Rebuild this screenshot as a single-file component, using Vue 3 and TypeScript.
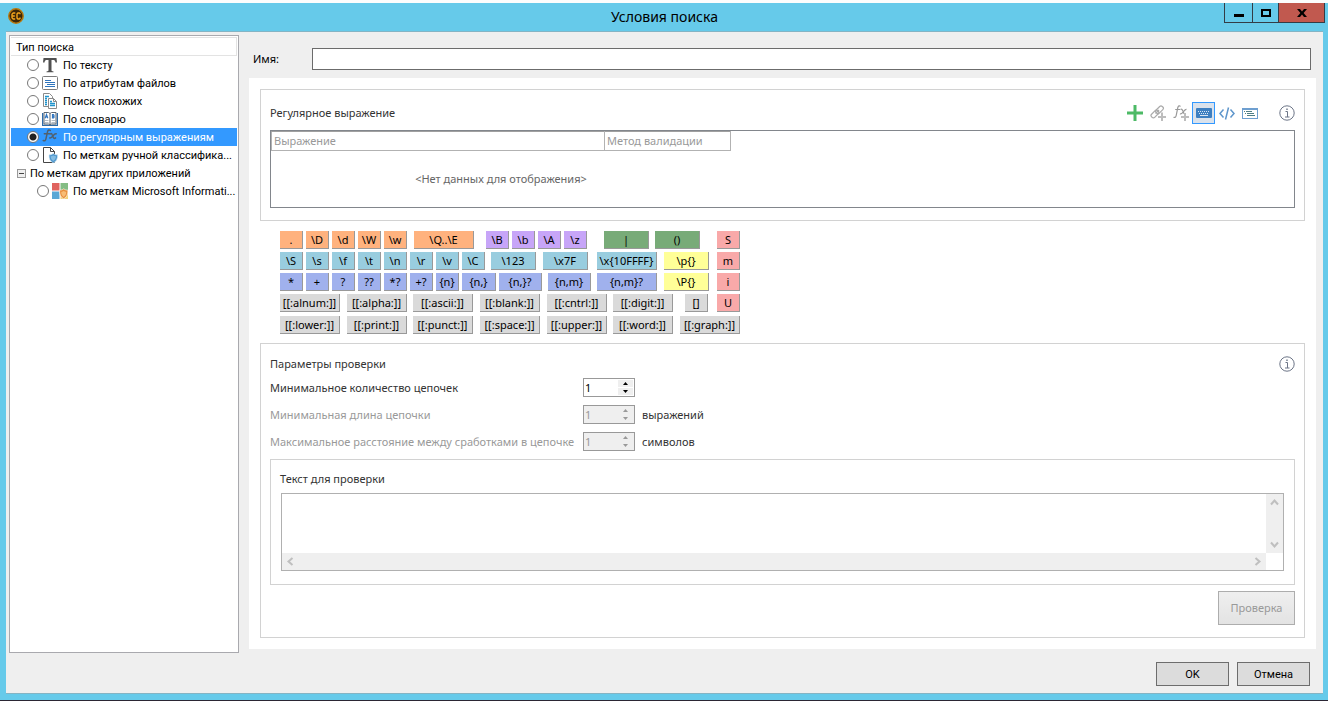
<script setup lang="ts">
import { ref } from 'vue'

type Tone = 'orange' | 'violet' | 'green' | 'red' | 'cyan' | 'yellow' | 'blue' | 'gray'
type Size = 's' | 'm' | 'n' | 'l' | 'xl'
interface Key { text: string; tone: Tone; size: Size; lead: number }

const k = (text: string, tone: Tone, size: Size = 's', lead = 3): Key => ({ text, tone, size, lead })

const keyRows: Key[][] = [
  [
    k('.', 'orange', 's', 0), k('\\D', 'orange'), k('\\d', 'orange'), k('\\W', 'orange'), k('\\w', 'orange'),
    k('\\Q..\\E', 'orange', 'xl', 7),
    k('\\B', 'violet', 's', 12), k('\\b', 'violet'), k('\\A', 'violet'), k('\\z', 'violet'),
    k('|', 'green', 'l', 17), k('()', 'green', 'l', 6), k('S', 'red', 's', 17),
  ],
  [
    k('\\S', 'cyan', 's', 0), k('\\s', 'cyan'), k('\\f', 'cyan'), k('\\t', 'cyan'), k('\\n', 'cyan'),
    k('\\r', 'cyan'), k('\\v', 'cyan'), k('\\C', 'cyan'),
    k('\\123', 'cyan', 'l', 6), k('\\x7F', 'cyan', 'l', 7), k('\\x{10FFFF}', 'cyan', 'xl', 9),
    k('\\p{}', 'yellow', 'l', 7), k('m', 'red', 's', 8),
  ],
  [
    k('*', 'blue', 's', 0), k('+', 'blue'), k('?', 'blue'), k('??', 'blue'), k('*?', 'blue'), k('+?', 'blue'), k('{n}', 'blue'),
    k('{n,}', 'blue', 'n'), k('{n,}?', 'blue', 'm'), k('{n,m}', 'blue', 'm', 6), k('{n,m}?', 'blue', 'xl', 6),
    k('\\P{}', 'yellow', 'l', 7), k('i', 'red', 's', 8),
  ],
  [
    k('[[:alnum:]]', 'gray', 'xl', 0), k('[[:alpha:]]', 'gray', 'xl', 7), k('[[:ascii:]]', 'gray', 'xl', 6),
    k('[[:blank:]]', 'gray', 'xl', 7), k('[[:cntrl:]]', 'gray', 'xl', 7), k('[[:digit:]]', 'gray', 'xl', 6),
    k('[]', 'gray', 's', 12), k('U', 'red', 's', 9),
  ],
  [
    k('[[:lower:]]', 'gray', 'xl', 0), k('[[:print:]]', 'gray', 'xl', 7), k('[[:punct:]]', 'gray', 'xl', 6),
    k('[[:space:]]', 'gray', 'xl', 7), k('[[:upper:]]', 'gray', 'xl', 7), k('[[:word:]]', 'gray', 'xl', 6),
    k('[[:graph:]]', 'gray', 'xl', 7),
  ],
]

const searchTypes = [
  { id: 'text', label: 'По тексту' },
  { id: 'attrs', label: 'По атрибутам файлов' },
  { id: 'similar', label: 'Поиск похожих' },
  { id: 'dict', label: 'По словарю' },
  { id: 'regex', label: 'По регулярным выражениям' },
  { id: 'marks', label: 'По меткам ручной классифика...' },
]
const selected = ref('regex')

const name = ref('')
const sample = ref('')
const params = ref([
  { id: 'count', label: 'Минимальное количество цепочек', unit: '', value: 1, disabled: false },
  { id: 'length', label: 'Минимальная длина цепочки', unit: 'выражений', value: 1, disabled: true },
  { id: 'distance', label: 'Максимальное расстояние между сработками в цепочке', unit: 'символов', value: 1, disabled: true },
])
</script>

<template>
  <div class="window">
    <header class="titlebar">
      <svg class="app-icon" viewBox="0 0 16 16" aria-hidden="true">
        <circle cx="8" cy="8" r="7.2" fill="#3b2608" stroke="#b8770e" stroke-width="1.5" />
        <path d="M7.3 5H5.2L4 6.2v3.6L5.2 11h2M4.2 8h2.6M12 6.3V5.6L11.4 5H9.9L9 6v4l.9 1h1.5l.6-.6v-.8" fill="none" stroke="#f3a51c" stroke-width="1.4" />
      </svg>
      <h1>Условия поиска</h1>
      <div class="caption-buttons">
        <button type="button" class="minimize" aria-label="Свернуть"><svg viewBox="0 0 10 10"><path d="M0 6h10v3H0z" /></svg></button>
        <button type="button" class="maximize" aria-label="Развернуть"><svg viewBox="0 0 10 10"><path d="M1 2h8v6H1z" fill="none" stroke="#000" stroke-width="2" /></svg></button>
        <button type="button" class="close" aria-label="Закрыть"><svg viewBox="0 0 10 10"><path d="M0 1h3l2 2.400L7 1h3L6.600 5 10 9H7L5 6.600 3 9H0l3.400-4z" /></svg></button>
      </div>
    </header>

    <div class="client">
      <div class="columns">
        <aside class="types" role="radiogroup" aria-labelledby="types-title">
          <div id="types-title" class="types-title">Тип поиска</div>
          <label v-for="t in searchTypes" :key="t.id" class="type" :class="{ selected: selected === t.id }">
            <input v-model="selected" type="radio" name="search-type" :value="t.id" />
            <svg viewBox="0 0 16 16" aria-hidden="true">
              <path v-if="t.id === 'text'" d="M1.500 1h13l.5 4.500h-1.500c-.3-2-1-2.500-2.500-2.500H9.500v10.200c0 .8.5 1.100 2 1.200V15.300h-7v-.9c1.500-.1 2-.4 2-1.200V3H5c-1.500 0-2.200.5-2.500 2.500H1z" fill="#505050" />
              <g v-else-if="t.id === 'attrs'" fill="none">
                <rect x=".5" y="1.500" width="15" height="13" rx="1" stroke="#7c7c7c" fill="#fff" />
                <path d="M3 5.500h6M3 7.500h10M5 9.500h8M3 11.500h10" stroke="#2f75bd" />
              </g>
              <g v-else-if="t.id === 'similar'" fill="none">
                <path d="M6.500 13.500h-5V.5h6l3 3v1.500" stroke="#8a8a8a" />
                <path d="M6.500 5.500h5l3 3v7h-8z" fill="#fff" stroke="#8a8a8a" />
                <path d="M11.500 5.500v3h3" stroke="#8a8a8a" />
                <path d="M3 3.500h4M3 5.500h2M3 7.500h2M3 9.500h2M3 11.500h2M8 8.500h2M8 10.500h5M8 12.500h5" stroke="#1f93cc" stroke-width="1.300" />
              </g>
              <g v-else-if="t.id === 'dict'" fill="none">
                <path d="M.6 2v12.400h14.800V2" stroke="#2f6ba8" stroke-width="1.300" />
                <path d="M2 1.500h4.500L8 2.500l1.500-1H14v11.500H9.500L8 14l-1.500-1H2z" fill="#fff" stroke="#5a6470" />
                <path d="M8 2.500V14" stroke="#5a6470" />
                <path d="M3.200 7.200 4.500 3.500l1.300 3.700M3.700 6h1.700M10.500 3.600v3.300h1q1.200-.8 0-1.600h-1 1q1-.9 0-1.700z" stroke="#2f75c0" stroke-width="1.200" />
                <path d="M3 9.500h3.500M3 11.500h3.500M9.500 9.500H13M9.500 11.500H13" stroke="#b4bcc4" />
              </g>
              <g v-else-if="t.id === 'regex'" fill="none" stroke="#51606e" stroke-linecap="round">
                <path d="M8.300 1.500C7.200.4 6 .9 5.500 2.900L4 9.700c-.4 1.900-1.300 2.500-2.800 1.800M2.300 4.700h5" stroke-width="1.500" />
                <path d="M8.200 5c1-.8 1.600-.3 2 .7l1.200 2.800c.5 1.100 1.300 1.200 2.200.4M14.200 4.800c-1.300-.2-2.200.7-3.200 2.100S9 9.400 7.600 8.900" stroke-width="1.500" />
              </g>
              <g v-else>
                <path d="M1.500 15.500V.5h7l4 4v11z" fill="#fff" stroke="#454545" />
                <path d="M8.500.5v4h4" fill="none" stroke="#454545" />
                <path d="M11.300 6.500c1.200 1 2.400 1.300 4.300 1.300 0 4-.9 6.500-4.300 8.100-3.400-1.600-4.300-4.100-4.300-8.100 1.900 0 3.100-.3 4.300-1.300z" fill="#4f97cd" stroke="#d8edf8" stroke-width=".6" />
                <path d="M11.300 8.500c.8.500 1.700.7 2.700.8-.1 2.300-.9 3.700-2.700 4.700-1.800-1-2.600-2.400-2.700-4.700 1-.1 1.900-.3 2.700-.8z" fill="#85bde2" />
              </g>
            </svg>
            <span>{{ t.label }}</span>
          </label>
          <div class="branch">
            <button type="button" aria-label="Свернуть группу" aria-expanded="true"></button>
            <span>По меткам других приложений</span>
          </div>
          <label class="type nested" :class="{ selected: selected === 'mip' }">
            <input v-model="selected" type="radio" name="search-type" value="mip" />
            <svg viewBox="0 0 16 16" aria-hidden="true">
              <path d="M0 0h7.500v7.500H0z" fill="#e0635f" /><path d="M8.500 0H16v7.500H8.500z" fill="#84bd84" />
              <path d="M0 8.500h7.500V16H0z" fill="#5aa7d6" /><path d="M8.500 8.500H16V16H8.500z" fill="#f3d27a" />
              <path d="M11.700 5.800c1.300 1 2.500 1.300 4.200 1.300 0 4.400-.9 7-4.200 8.700-3.300-1.700-4.200-4.300-4.200-8.700 1.700 0 2.900-.3 4.200-1.300z" fill="#e88f3c" stroke="#fff" stroke-width=".6" />
              <path d="M11.700 8c.7.500 1.500.8 2.500.9-.1 2.400-.8 3.900-2.500 5-1.700-1.100-2.400-2.600-2.500-5 1-.1 1.800-.4 2.500-.9z" fill="#f7bd76" />
            </svg>
            <span>По меткам Microsoft Informati...</span>
          </label>
        </aside>

        <main class="content">
          <div class="name-row">
            <label for="name">Имя:</label>
            <input id="name" v-model="name" type="text" />
          </div>

          <div class="page">
            <section class="group regex">
              <div class="group-head">
                <h2>Регулярное выражение</h2>
                <div class="toolbar">
                  <button type="button" aria-label="Добавить"><svg viewBox="0 0 16 16"><path d="M6.500 0h3v6.500H16v3H9.500V16h-3V9.500H0v-3h6.500z" fill="#4dba66" /></svg></button>
                  <button type="button" aria-label="Добавить ссылку">
                    <svg viewBox="0 0 16 16" fill="none" stroke="#aaa" stroke-width="1.200">
                      <rect x="5.200" y="2.600" width="8.600" height="4.400" rx="1.800" transform="rotate(-45 9.500 4.800)" />
                      <rect x=".6" y="6.800" width="8.600" height="4.400" rx="1.800" transform="rotate(-45 4.900 9)" />
                      <path d="m5.500 8.500 3.500-3.500" />
                      <path d="M12 7.500v8.500M8 12h8" stroke="#bdbdbd" stroke-width="2" />
                    </svg>
                  </button>
                  <button type="button" aria-label="Добавить функцию">
                    <svg viewBox="0 0 16 16" fill="none" stroke="#999">
                      <path d="M7.500 1.500C6.500.2 5.200.7 4.700 3L3.200 10.500C2.900 12.300 2 12.800.5 12.200M2.200 4.500H7" stroke-width="1.200" />
                      <path d="M7.500 4.500c1.300-.8 1.900.2 2.300 1.300l1.200 3M13.500 4.300c-1.200-.2-1.900.8-3 2.200S8.300 9.500 7 8.800" stroke-width="1.200" />
                      <path d="M12 8v8M8 12h8" stroke="#bdbdbd" stroke-width="2" />
                    </svg>
                  </button>
                  <button type="button" class="pressed" aria-label="Клавиатура" aria-pressed="true">
                    <svg viewBox="0 0 16 16"><rect y="3" width="16" height="10" rx="1" fill="#3d7fc1" />
                      <path d="M2 6.500h12M3 8.500h10" stroke="#d9e6f3" stroke-dasharray="1 1" /><path d="M4 10.500h8" stroke="#d9e6f3" /></svg>
                  </button>
                  <button type="button" aria-label="Код"><svg viewBox="0 0 16 16"><path d="M4.500 4.500 1 8.500l3.500 4M11.500 4.500l3.500 4-3.500 4M9.500 2.500l-3 12" fill="none" stroke="#5e96cc" stroke-width="1.500" /></svg></button>
                  <button type="button" aria-label="Текст">
                    <svg viewBox="0 0 16 16" fill="none"><rect x=".5" y="3.500" width="15" height="10" stroke="#6e9fd0" /><path d="M0 4h16" stroke="#6e9fd0" stroke-width="2" />
                      <path d="M2 6.500h1M4 6.500h6M3 8.500h1M5 8.500h7M5 10.500h8" stroke="#4f7f86" /></svg>
                  </button>
                  <button type="button" class="info" aria-label="Справка">
                    <svg viewBox="0 0 16 16" fill="none" stroke="#6c7587"><circle cx="8" cy="8" r="7.200" /><path d="M6.500 6.500H8.500V12M6 12h4.500" /><path d="M7.300 4.200h1.400" stroke-width="1.500" /></svg>
                  </button>
                </div>
              </div>
              <div class="grid-box">
                <table>
                  <thead><tr><th scope="col" class="expr">Выражение</th><th scope="col">Метод валидации</th></tr></thead>
                  <tbody><tr><td colspan="2">&lt;Нет данных для отображения&gt;</td></tr></tbody>
                </table>
              </div>
            </section>

            <div class="keys">
              <div v-for="(row, i) in keyRows" :key="i" class="key-row">
                <button v-for="key in row" :key="key.text" type="button" :class="['key', key.tone, 'w-' + key.size, 'lead-' + key.lead]">{{ key.text }}</button>
              </div>
            </div>

            <section class="group params">
              <div class="group-head">
                <h2>Параметры проверки</h2>
                <button type="button" class="info" aria-label="Справка">
                  <svg viewBox="0 0 16 16" fill="none" stroke="#6c7587"><circle cx="8" cy="8" r="7.200" /><path d="M6.500 6.500H8.500V12M6 12h4.500" /><path d="M7.300 4.200h1.400" stroke-width="1.500" /></svg>
                </button>
              </div>
              <div v-for="p in params" :key="p.id" class="param" :class="{ off: p.disabled }">
                <label :for="p.id">{{ p.label }}</label>
                <div class="spin">
                  <input :id="p.id" v-model="p.value" type="number" min="1" :disabled="p.disabled" />
                  <div class="arrows">
                    <button type="button" aria-label="Больше" :disabled="p.disabled" @click="p.value++"><svg viewBox="0 0 5 3"><path d="M0 3 2.500 0 5 3z" /></svg></button>
                    <button type="button" aria-label="Меньше" :disabled="p.disabled" @click="p.value--"><svg viewBox="0 0 5 3"><path d="M0 0 2.500 3 5 0z" /></svg></button>
                  </div>
                </div>
                <span class="unit">{{ p.unit }}</span>
              </div>

              <div class="sample">
                <label for="sample">Текст для проверки</label>
                <div class="memo">
                  <textarea id="sample" v-model="sample"></textarea>
                  <div class="bar vertical">
                    <svg viewBox="0 0 9 8"><path d="m1 6 3.500-4L8 6" /></svg>
                    <svg viewBox="0 0 9 8"><path d="m1 2 3.500 4L8 2" /></svg>
                  </div>
                  <div class="bar horizontal">
                    <svg viewBox="0 0 8 9"><path d="M6 1 2 4.500 6 8" /></svg>
                    <svg viewBox="0 0 8 9"><path d="m2 1 4 3.500L2 8" /></svg>
                  </div>
                </div>
              </div>
              <button type="button" class="check" disabled>Проверка</button>
            </section>
          </div>
        </main>
      </div>

      <footer>
        <button type="button">OK</button>
        <button type="button">Отмена</button>
      </footer>
    </div>
  </div>
</template>

<style>
html, body { margin: 0; background: #fff; }
</style>

<style scoped>
* { box-sizing: border-box; }
button, input, textarea { font: inherit; color: inherit; margin: 0; padding: 0; border: 0; border-radius: 0; outline: 0; }
svg { display: block; flex: none; }
h1, h2 { margin: 0; font-weight: 400; }

.window {
  display: flex;
  flex-direction: column;
  min-height: 100vh;
  padding: 0 5px 6px 6px;
  border-top: 3px solid #fcfdfd;
  border-bottom: 1px solid #2b2634;
  background: #66caea;
  color: #000;
  font: 11px/18px Roboto, "Noto Sans", sans-serif;
}
.titlebar { display: grid; grid-template-columns: 1fr auto 1fr; height: 28px; }
.app-icon { width: 16px; height: 16px; margin: 5px 0 0 2px; }
.titlebar h1 { font: 14px/27px "Noto Sans", sans-serif; }
.caption-buttons { display: flex; justify-self: end; height: 20px; margin-right: -2px; border: 1px solid #333c46; border-top: 0; }
.caption-buttons button { display: flex; align-items: center; justify-content: center; width: 28px; background: transparent; border-right: 1px solid #333c46; }
.caption-buttons .maximize { width: 26px; }
.caption-buttons .close { width: 45px; background: #c1594f; border-right: 0; }
.caption-buttons svg { width: 10px; height: 10px; }

.client { flex: 1; display: flex; flex-direction: column; background: #efefef; border-top: 1px solid #84b4c4; border-bottom: 1px solid #84b4c4; }
.columns { flex: 1; display: flex; gap: 10px; padding: 3px 7px 0 3px; }

.types { width: 230px; padding: 1px; border: 1px solid #a9a9ae; background: #fff; }
.types-title { height: 19px; padding-left: 5px; line-height: 20px; border: 1px solid #e3e3e3; border-left: 0; }
.type { display: flex; align-items: center; height: 18px; padding: 0 2px 0 16px; white-space: nowrap; }
.type.nested { padding-left: 26px; }
.type.selected { background: #3399ff; color: #fff; }
.type span, .branch span { padding-top: 2px; }
.type input { appearance: none; flex: none; width: 12px; height: 12px; border: 1px solid #777; border-radius: 50%; background: #fff; }
.type input:checked { background: radial-gradient(circle, #222 0 3px, #fff 4px); }
.type svg { width: 16px; height: 16px; margin: 0 5px 0 3px; }
.branch { display: flex; align-items: center; gap: 4px; height: 18px; padding-left: 6px; }
.branch button { width: 9px; height: 9px; border: 1px solid #999; background: linear-gradient(#444, #444) center / 5px 1px no-repeat #eee; }

.content { flex: 1; min-width: 0; display: flex; flex-direction: column; }
.name-row { display: flex; align-items: center; height: 22px; margin: 13px 5px 8px 4px; }
.name-row label { width: 59px; font-family: "Noto Sans", sans-serif; }
.name-row input { flex: 1; height: 22px; padding: 0 4px; border: 1px solid #6b6b6b; background: #fff; }

.page { padding: 11px; background: #fff; color: #333; font-family: "Noto Sans", sans-serif; flex: 1; margin-bottom: 4px; }
.group { border: 1px solid #d2d2d2; padding: 0 9px 12px; }
.group-head { display: flex; align-items: center; justify-content: space-between; }
.group-head h2 { font-size: 11px; }
.regex .group-head { height: 24px; margin: 11px 0 5px; }
.params .group-head { height: 21px; margin-top: 9px; }
.toolbar { display: flex; align-items: center; }
.toolbar button { display: flex; align-items: center; justify-content: center; width: 23px; height: 22px; background: transparent; }
.toolbar .pressed { border: 1px solid #3399ff; background: #dae2ec; }
.toolbar svg { width: 16px; height: 16px; }
.info { width: 16px; height: 16px; background: transparent; }
.info svg { width: 16px; height: 16px; }
.toolbar .info { width: 16px; margin-left: 18px; }

.grid-box { height: 78px; border: 1px solid #82868c; }
table { width: 460px; border-collapse: collapse; }
th { height: 19px; padding: 0 2px; border: 1px solid #b2b2b2; border-top-color: #a0a0a0; text-align: left; font-weight: 400; line-height: 16px; color: #999; }
th.expr { width: 333px; }
td { height: 56px; padding: 0; text-align: center; color: #666; }

.keys { display: flex; flex-direction: column; gap: 3px; margin: 10px 0 9px 20px; color: #000; }
.key-row { display: flex; }
.key-row:last-child { margin-top: 1px; }
.key { flex: none; height: 18px; line-height: 16px; border-right: 1px solid #999; border-bottom: 1px solid #999; white-space: nowrap; text-align: center; }
.w-s { width: 23px; } .w-n { width: 34px; } .w-m { width: 43px; } .w-l { width: 45px; } .w-xl { width: 60px; }
.lead-3 { margin-left: 3px; } .lead-6 { margin-left: 6px; } .lead-7 { margin-left: 7px; } .lead-8 { margin-left: 8px; }
.lead-9 { margin-left: 9px; } .lead-12 { margin-left: 12px; } .lead-17 { margin-left: 17px; }
.orange { background: #ffb27e; } .violet { background: #c7a5f8; } .green { background: #78ab78; } .red { background: #f9a9a9; }
.cyan { background: #99cddf; } .yellow { background: #ffff98; } .blue { background: #a0b1ed; } .gray { background: #dadada; }

.param { display: grid; grid-template-columns: 306px 52px auto; column-gap: 7px; align-items: center; height: 27px; }
.param.off label { color: #999; }
.param label { white-space: nowrap; }
.spin { display: flex; height: 19px; border: 1px solid #999; background: #fff; color: #000; }
.spin input { flex: 1; min-width: 0; padding-left: 1px; background: transparent; appearance: textfield; }
.spin input::-webkit-inner-spin-button { appearance: none; margin: 0; }
.arrows { display: flex; flex-direction: column; gap: 1px; width: 16px; padding: 1px 1px 1px 0; }
.arrows button { flex: 1; display: flex; align-items: center; justify-content: center; background: #efefef; }
.arrows svg { width: 5px; height: 3px; fill: #000; }
.off .spin { background: #efefef; color: #999; }
.off .arrows svg { fill: #999; }

.sample { margin-top: 4px; padding: 9px 10px 13px; border: 1px solid #d2d2d2; }
.sample label { display: block; height: 19px; margin: 0 0 5px -1px; line-height: 19px; }
.memo { display: grid; grid-template: 1fr 17px / 1fr 17px; height: 78px; border: 1px solid #b0b0b0; background: #fff; }
.memo textarea { resize: none; overflow: hidden; background: #fff; }
.bar { display: flex; justify-content: space-between; align-items: center; background: #efefef; }
.bar svg { width: 9px; height: 9px; fill: none; stroke: #bfbfbf; stroke-width: 2; }
.vertical { flex-direction: column; padding: 4px 0; }
.horizontal { padding: 0 4px; }
.check { display: block; width: 77px; height: 34px; margin: 6px 0 0 auto; border: 1px solid #adadad; background: linear-gradient(#efefef, #e3e3e3); color: #999; }

footer { display: flex; justify-content: flex-end; gap: 8px; padding: 9px 13px 7px; }
footer button { width: 73px; height: 24px; padding-top: 2px; border: 1px solid #6d6d6d; background: #dcdcdc; }
</style>
